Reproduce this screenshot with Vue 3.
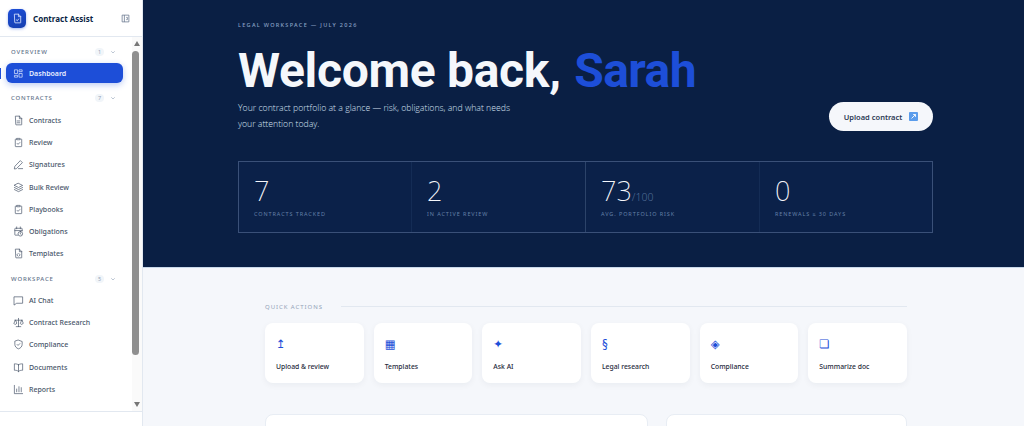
<script setup>
const icons = {
  dash: ['M4 4h6v8H4z', 'M14 4h6v4h-6z', 'M14 12h6v8h-6z', 'M4 16h6v4H4z'],
  file: ['M6 2.500h8l5 5V21a.5.5 0 0 1-.5.5h-12A.5.5 0 0 1 6 21z', 'M14 2.500V8h5', 'M9 13h6', 'M9 17h6'],
  clip: ['M8 4.500H6a1 1 0 0 0-1 1V20a1 1 0 0 0 1 1h12a1 1 0 0 0 1-1V5.500a1 1 0 0 0-1-1h-2', 'M9 3h6v3H9z', 'M9 14l2 2 4-4'],
  pen: ['M12 21h9', 'M3 21l1-5L16 3.500l4.500 4.500L8 20.500z'],
  layers: ['M12 3l9 4.500-9 4.500-9-4.500z', 'M3 12l9 4.500 9-4.500', 'M3 16.500L12 21l9-4.500'],
  cal: ['M8 2v4', 'M16 2v4', 'M10 20H5a1 1 0 0 1-1-1V6a1 1 0 0 1 1-1h14a1 1 0 0 1 1 1v5', 'M4 10h16', 'M16 12a5 5 0 1 1 0 10 5 5 0 0 1 0-10z', 'M16 15v2.200l1.500 1'],
  code: ['M6 2.500h8l5 5V21a.5.5 0 0 1-.5.5h-12A.5.5 0 0 1 6 21z', 'M14 2.500V8h5', 'M10.500 12.500L8.500 15l2 2.500', 'M13.500 12.500l2 2.500-2 2.500'],
  chat: ['M3 4h18v14H8l-5 3.500z'],
  scale: ['M12 3v18', 'M7 21h10', 'M4 7h16', 'M5 7l-3 7a3.200 3.200 0 0 0 6 0z', 'M19 7l-3 7a3.200 3.200 0 0 0 6 0z'],
  shield: ['M12 2.500l8 3v6c0 5-3.500 8.500-8 10-4.500-1.500-8-5-8-10v-6z', 'M9 12l2 2 4-4'],
  book: ['M12 6v15', 'M12 6C10 4.500 7 4 3 4v14c4 0 7 .5 9 3 2-2.500 5-3 9-3V4c-4 0-7 .5-9 2z'],
  chart: ['M3 3v18h18', 'M8 17v-6', 'M13 17V6', 'M18 17v-9'],
  home: ['M4 11l8-7 8 7', 'M6 10v10h12V10']
}
const groups = [
  { name: 'OVERVIEW', count: 1, items: [{ label: 'Dashboard', icon: 'dash', active: true }] },
  { name: 'CONTRACTS', count: 7, items: [
    { label: 'Contracts', icon: 'file' }, { label: 'Review', icon: 'clip' }, { label: 'Signatures', icon: 'pen' },
    { label: 'Bulk Review', icon: 'layers' }, { label: 'Playbooks', icon: 'clip' }, { label: 'Obligations', icon: 'cal' },
    { label: 'Templates', icon: 'code' }
  ] },
  { name: 'WORKSPACE', count: 5, items: [
    { label: 'AI Chat', icon: 'chat' }, { label: 'Contract Research', icon: 'scale' }, { label: 'Compliance', icon: 'shield' },
    { label: 'Documents', icon: 'book' }, { label: 'Reports', icon: 'chart' }
  ] }
]
const stats = [
  { value: '7', label: 'CONTRACTS TRACKED' },
  { value: '2', label: 'IN ACTIVE REVIEW' },
  { value: '73', sub: '/100', label: 'AVG. PORTFOLIO RISK' },
  { value: '0', label: 'RENEWALS ≤ 30 DAYS' }
]
const actions = [
  { glyph: '↥', label: 'Upload & review' },
  { glyph: '▦', label: 'Templates' },
  { glyph: '✦', label: 'Ask AI' },
  { glyph: '§', label: 'Legal research' },
  { glyph: '◈', label: 'Compliance' },
  { glyph: '❏', label: 'Summarize doc' }
]
</script>

<template>
  <div class="app">
    <aside class="side">
      <header class="brand">
        <span class="logo">
          <svg viewBox="0 0 24 24" width="11" height="11" fill="none" stroke="#dbe6ff" stroke-width="1.800" stroke-linecap="round" stroke-linejoin="round">
            <path d="M6 2.500h8l5 5V21a.5.5 0 0 1-.5.5h-12A.5.5 0 0 1 6 21z" />
            <path d="M14 2.500V8h5" />
            <path d="M9.500 15l2 2 3-4" />
          </svg>
        </span>
        <strong class="brand-name">Contract Assist</strong>
        <svg class="collapse" viewBox="0 0 24 24" width="9" height="9" fill="none" stroke="#64748b" stroke-width="2">
          <path d="M3 3h18v18H3z" />
          <path d="M9 3v18" />
          <path d="M14 9h3v6h-3" />
        </svg>
      </header>
      <nav class="nav">
        <section v-for="g in groups" :key="g.name" class="group">
          <div class="group-head">
            <span class="group-name">{{ g.name }}</span>
            <span class="count">{{ g.count }}</span>
            <svg viewBox="0 0 24 24" width="6" height="6" fill="none" stroke="#94a3b8" stroke-width="2.500"><path d="M5 9l7 7 7-7" /></svg>
          </div>
          <a v-for="it in g.items" :key="it.label" class="item" :class="{ active: it.active }">
            <svg viewBox="0 0 24 24" width="11" height="11" fill="none" stroke="currentColor" stroke-width="1.500" stroke-linecap="round" stroke-linejoin="round">
              <path v-for="d in icons[it.icon]" :key="d" :d="d" />
            </svg>
            <span>{{ it.label }}</span>
          </a>
        </section>
        <div class="scrollbar">
          <i class="arrow up"></i>
          <i class="thumb"></i>
          <i class="arrow down"></i>
        </div>
      </nav>
      <footer class="foot">
        <svg viewBox="0 0 24 24" width="11" height="11" fill="none" stroke="#475569" stroke-width="1.700"><path v-for="d in icons.home" :key="d" :d="d" /></svg>
      </footer>
      <span class="marker"></span>
    </aside>

    <main class="main">
      <section class="hero">
        <p class="eyebrow">LEGAL WORKSPACE — JULY 2026</p>
        <h1 class="title">Welcome back, <em>Sarah</em></h1>
        <div class="hero-row">
          <p class="lede">Your contract portfolio at a glance — risk, obligations, and what needs your attention today.</p>
          <button class="upload">
            Upload contract
            <svg viewBox="0 0 10 10" width="9" height="9"><rect width="10" height="10" rx="1" fill="#5a9cec" /><path d="M2.800 7.200L7.200 2.800M4.600 2.800h2.600v2.600" fill="none" stroke="#fff" stroke-width="1" /></svg>
          </button>
        </div>
        <div class="stats">
          <div v-for="s in stats" :key="s.label" class="stat">
            <div class="stat-value">{{ s.value }}<small v-if="s.sub">{{ s.sub }}</small></div>
            <div class="stat-label">{{ s.label }}</div>
          </div>
        </div>
      </section>
      <section class="body">
        <div class="qa-head"><span>QUICK ACTIONS</span><i></i></div>
        <div class="qa-grid">
          <div v-for="a in actions" :key="a.label" class="qa">
            <span class="glyph">{{ a.glyph }}</span>
            <span class="qa-label">{{ a.label }}</span>
          </div>
        </div>
        <div class="lower">
          <div class="panel"></div>
          <div class="panel"></div>
        </div>
      </section>
    </main>
  </div>
</template>

<style>
html, body { margin: 0; height: 100%; overflow: hidden; }
</style>

<style scoped>
.app {
  display: flex;
  width: 1024px;
  height: 426px;
  overflow: hidden;
  font-family: "Noto Sans", sans-serif;
  background: #f5f7fb;
}
.side {
  position: relative;
  flex: 0 0 143px;
  width: 143px;
  height: 426px;
  display: flex;
  flex-direction: column;
  background: #fff;
  box-sizing: border-box;
  border-right: 1px solid #e2e8f0;
}
.brand {
  flex: 0 0 37px;
  display: flex;
  align-items: center;
  gap: 7px;
  padding: 0 12px 0 8px;
  border-bottom: 1px solid #e2e8f0;
  box-sizing: border-box;
}
.logo {
  flex: 0 0 18px;
  width: 18px;
  height: 19px;
  border-radius: 5px;
  background: linear-gradient(160deg, #1d4ed8, #163fae);
  display: flex;
  align-items: center;
  justify-content: center;
  box-shadow: 0 1px 3px rgba(29, 78, 216, .4);
}
.brand-name { flex: 1; font-size: 8px; color: #0a1f44; font-weight: 700; white-space: nowrap; }
.nav {
  position: relative;
  flex: 0 0 374px;
  height: 374px;
  overflow: hidden;
  padding: 0 0 0 6px;
  box-sizing: border-box;
}
.scrollbar {
  position: absolute;
  top: 0;
  right: 0;
  width: 10px;
  height: 374px;
  background: #fafafa;
}
.arrow {
  position: absolute;
  left: 2px;
  width: 0;
  height: 0;
  border-left: 3px solid transparent;
  border-right: 3px solid transparent;
}
.arrow.up { top: 4px; border-bottom: 5px solid #777; }
.arrow.down { bottom: 4px; border-top: 5px solid #777; }
.thumb {
  position: absolute;
  top: 14px;
  left: 0;
  width: 7px;
  height: 304px;
  border-radius: 4px;
  background: #8f8f8f;
}
.group { width: 117px; }
.group-head {
  display: flex;
  align-items: center;
  gap: 4px;
  height: 24px;
  padding: 3px 7px 0 5px;
  box-sizing: border-box;
}
.group:nth-child(1) .group-head { margin-bottom: 2px; padding-top: 5px; }
.group:nth-child(2) .group-head { padding-top: 2px; }
.group-name { flex: 1; font-size: 6px; letter-spacing: .8px; color: #64748b; font-weight: 500; }
.count {
  width: 9px;
  height: 8px;
  border-radius: 4px;
  background: #f1f5f9;
  color: #94a3b8;
  font-size: 5.500px;
  display: flex;
  align-items: center;
  justify-content: center;
  margin-right: 2px;
}
.item {
  display: flex;
  align-items: center;
  gap: 5px;
  height: 22.300px;
  padding: 0 7px;
  color: #475569;
  font-size: 7px;
  font-weight: 500;
  border-radius: 6px;
}
.item.active {
  height: 20px;
  margin-bottom: 2px;
  background: #1d4ed8;
  color: #e8efff;
  font-weight: 600;
  box-shadow: 0 2px 6px rgba(29, 78, 216, .3);
}
.foot {
  flex: 0 0 auto;
  height: 40px;
  border-top: 1px solid #e2e8f0;
  padding: 11px 0 0 12px;
  box-sizing: border-box;
}
.marker {
  position: absolute;
  left: 0;
  top: 68px;
  width: 1px;
  height: 11px;
  background: #1d4ed8;
}
.main { flex: 1; min-width: 0; height: 426px; overflow: hidden; }
.hero {
  height: 268px;
  box-sizing: border-box;
  background: #0a1f44;
  padding: 21px 91px 0 95px;
  border-bottom: 1px solid #c9d8ea;
}
.eyebrow { margin: 0; font-size: 5.500px; line-height: 9px; letter-spacing: 1.300px; color: #8ba3c7; font-weight: 500; }
.title {
  margin: 13px 0 0;
  font-size: 48px;
  line-height: 56px;
  font-weight: 700;
  color: #f5f7fb;
  letter-spacing: -.3px;
  white-space: nowrap;
  font-family: Roboto, sans-serif;
}
.title em { font-style: normal; color: #1d4ed8; margin-left: 2px; letter-spacing: -.6px; }
.hero-row { display: flex; justify-content: space-between; align-items: flex-end; margin-top: 1px; }
.lede {
  margin: 0;
  width: 290px;
  font-size: 8.700px;
  line-height: 16px;
  color: #d5e0f0;
  font-weight: 300;
  font-family: "Open Sans", sans-serif;
}
.upload {
  width: 104px;
  height: 29px;
  margin-bottom: 1px;
  border: 0;
  border-radius: 15px;
  background: #f5f7fb;
  color: #2c3a55;
  font: 600 7.500px "Noto Sans", sans-serif;
  display: flex;
  align-items: center;
  justify-content: center;
  gap: 7px;
  padding: 0;
}
.stats {
  display: grid;
  grid-template-columns: 172px 174px 174px 1fr;
  margin-top: 29px;
  height: 72px;
  border: 1px solid #3a5078;
  background: #0b2149;
  box-sizing: border-box;
}
.stat { padding: 14px 15px 0; border-left: 1px solid #142c55; }
.stat:first-child { border-left: 0; }
.stat:nth-child(3) { border-left-color: #2c4369; }
.stat-value {
  font-family: "Noto Sans", sans-serif;
  font-size: 27px;
  line-height: 30px;
  font-weight: 200;
  color: #f5f7fb;
  height: 30px;
}
.stat-value small { font-size: 10.500px; line-height: 0; color: #4f6a94; font-weight: 300; }
.stat-label { margin-top: 4px; font-size: 5.500px; line-height: 9px; letter-spacing: .9px; color: #6480a8; }
.body { padding: 33px 117px 0 122px; }
.qa-head { display: flex; align-items: center; gap: 18px; height: 11px; }
.qa-head span { font-size: 6px; letter-spacing: .95px; color: #94a3b8; }
.qa-head i { flex: 1; height: 1px; background: #e2e8f0; }
.qa-grid { display: grid; grid-template-columns: repeat(6, 1fr); gap: 10px; margin-top: 11px; }
.qa {
  height: 60px;
  box-sizing: border-box;
  background: #fff;
  border-radius: 8px;
  box-shadow: 0 2px 6px rgba(10, 31, 68, .05);
  padding: 14px 11px 0;
  display: flex;
  flex-direction: column;
}
.glyph { font-size: 11.500px; line-height: 15px; color: #1d4ed8; font-family: "DejaVu Sans", sans-serif; }
.qa-label { margin-top: 9px; font-size: 6.800px; line-height: 11px; font-weight: 500; color: #1e293b; }
.lower { display: grid; grid-template-columns: 383px 241px; gap: 18px; margin-top: 31px; }
.panel { height: 80px; background: #fff; border: 1px solid #e8edf4; border-radius: 8px; }
</style>
